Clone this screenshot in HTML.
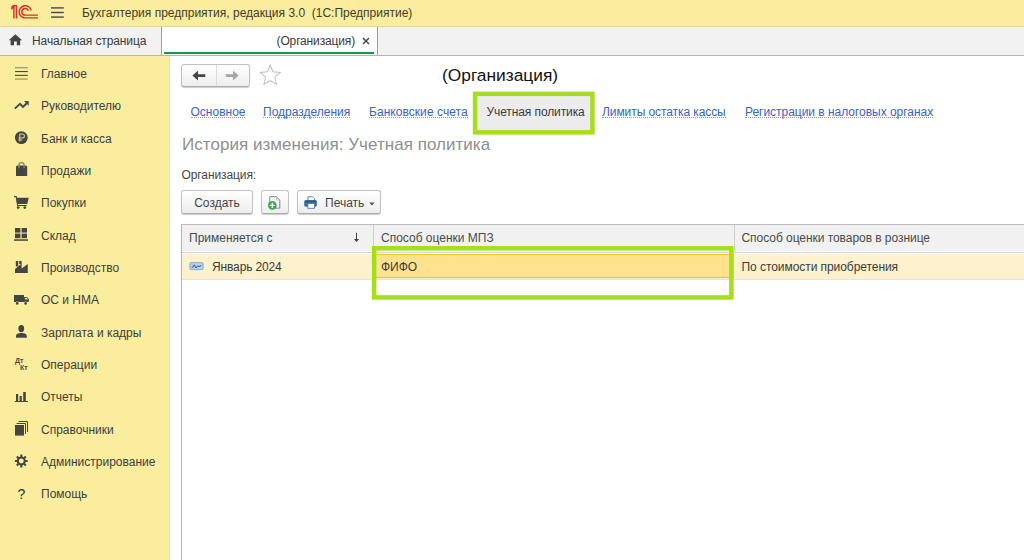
<!DOCTYPE html>
<html lang="ru"><head><meta charset="utf-8"><title>1С:Предприятие</title>
<style>
*{box-sizing:border-box;margin:0;padding:0}
html,body{width:1024px;height:560px;overflow:hidden;background:#fff}
body{font-family:"Liberation Sans",Arial,sans-serif;font-size:12px;color:#333;position:relative}
.abs{position:absolute}
#titlebar{left:0;top:0;width:1024px;height:27px;background:#fbed9e;border-bottom:1px solid #e3d58c}
#titlebar .t{left:82px;top:0;line-height:27px;font-size:12px;color:#3f3a2c;white-space:pre}
#tabbar{left:0;top:27px;width:1024px;height:29px;background:#f2f2f2;border-bottom:1px solid #b5b5b5}
#hometab{left:0;top:0;width:161px;height:28px}
#hometab .t{left:32px;top:0;line-height:28px;color:#3a3a3a;letter-spacing:-0.1px}
#sep1{left:161px;top:0;width:1px;height:28px;background:#9a9a9a}
#acttab{left:162px;top:0;width:215px;height:28px;background:#fff}
#acttab .t{right:22px;top:0;line-height:28px;color:#3a3a3a;letter-spacing:-0.15px}
#acttab .g{left:2px;right:3px;top:25px;height:2px;background:#0f9d49}
#sep2{left:377px;top:0;width:1px;height:28px;background:#9a9a9a}
#sidebar{left:0;top:56px;width:170px;height:504px;background:#fbed9e}
#sidebar .it{left:41px;line-height:16px;color:#3d3d3d;white-space:nowrap}
#sidebar svg{position:absolute}
#main{left:170px;top:56px;width:854px;height:504px;background:#fff}
.btn{position:absolute;border:1px solid #c2c2c2;border-bottom-color:#ababab;border-radius:3px;background:linear-gradient(#fff,#ededed);box-shadow:0 1px 1px rgba(0,0,0,.2);color:#444;text-align:center}
a.l{position:absolute;color:#3a62c0;text-decoration:none;border-bottom:1px dotted #7f9ad8;line-height:10px;top:51px;white-space:nowrap}
</style></head><body>

<div id="titlebar" class="abs">
  <svg class="abs" style="left:0;top:0" width="70" height="27" viewBox="0 0 70 27"><g fill="none" stroke="#de2c25" stroke-width="1.4"><path d="M11.3 9.4 L13.9 6.4 V18.6"/><path d="M11.3 7.6 L13.2 5.6 H16.4 V18.6"/><path d="M31.2 10.4 A6.1 6.1 0 1 0 25.1 17.9 H38"/><path d="M28.3 10.9 A3.3 3.3 0 1 0 25.1 15.1 H38"/></g></svg>
  <svg class="abs" style="left:50px;top:5px" width="16" height="16" viewBox="50 5 16 16"><g fill="#4b4a3f"><rect x="51" y="7.2" width="12.8" height="1.4"/><rect x="51" y="11.8" width="12.8" height="1.4"/><rect x="51" y="16.4" width="12.8" height="1.4"/></g></svg>
  <div class="abs t">Бухгалтерия предприятия, редакция 3.0  (1С:Предприятие)</div>
</div>

<div id="tabbar" class="abs">
  <div id="hometab" class="abs">
    <svg class="abs" style="left:8px;top:7px" width="15" height="12" viewBox="0 0 15 12"><path d="M7.4 0.3 L0.7 6.2 H2.6 V11.2 H6 V7.6 H8.8 V11.2 H12.2 V6.2 H14.1 Z" fill="#444"/></svg>
    <div class="abs t">Начальная страница</div>
  </div>
  <div id="sep1" class="abs"></div>
  <div id="acttab" class="abs">
    <div class="abs t">(Организация)</div>
    <svg class="abs" style="left:200px;top:10px" width="8" height="8" viewBox="0 0 8 8"><path d="M1 1 L7 7 M7 1 L1 7" stroke="#4a4a4a" stroke-width="1.5"/></svg>
    <div class="abs g"></div>
  </div>
  <div id="sep2" class="abs"></div>
</div>

<div id="sidebar" class="abs">
  <div class="abs" style="left:169px;top:0;width:1px;height:504px;background:#f1e49a"></div>
  <svg class="abs" style="left:0;top:0" width="40" height="504" viewBox="0 56 40 504">
    <g fill="#454545" stroke="none">
      <!-- Главное -->
      <rect x="15" y="67.2" width="12.8" height="1.1" opacity=".6"/><rect x="15" y="71" width="12.8" height="1.1"/><rect x="15" y="74.8" width="12.8" height="1.1"/><rect x="15" y="78.5" width="12.8" height="1.1" opacity=".6"/>
      <!-- Руководителю -->
      <path d="M14.8 108.6 L20 103.8 L23 107 L27 103" fill="none" stroke="#454545" stroke-width="1.9" stroke-linejoin="miter"/>
      <path d="M24 101 H28.7 V105.8 Z"/>
      <!-- Банк и касса -->
      <circle cx="21.3" cy="137.6" r="6.4"/>
      <path d="M19.8 141.6 V134 H22.4 A2 2 0 0 1 22.4 138 H18.4 M18.4 140 H22.2" fill="none" stroke="#d6cb8b" stroke-width="1.15"/>
      <!-- Продажи -->
      <path d="M16 166.6 L17.2 165.4 H26 L27.2 166.6 V176 H16 Z"/>
      <path d="M18.9 168.2 V165.2 A2.6 2.6 0 0 1 24.1 165.2 V168.2" fill="none" stroke="#8b846a" stroke-width="1.3"/>
      <!-- Покупки -->
      <path d="M14 196.6 H16.2 L17.6 205.5 H26.8" fill="none" stroke="#454545" stroke-width="1.1"/>
      <path d="M16.2 197.8 H28.7 L27.3 204 H17.2 Z"/>
      <circle cx="18.2" cy="207.6" r="1.4"/><circle cx="24.8" cy="207.6" r="1.4"/>
      <!-- Склад -->
      <rect x="15" y="228" width="5.4" height="4.6"/><rect x="21.6" y="228" width="5.4" height="4.6"/><rect x="15" y="233.6" width="5.4" height="4.6"/><rect x="21.6" y="233.6" width="5.4" height="4.6"/>
      <rect x="14" y="239.3" width="14" height="1.5"/>
      <!-- Производство -->
      <path d="M15 273 V269 L21.6 263.4 V268.4 L27.8 264 V273 Z"/>
      <rect x="15.8" y="261" width="2.4" height="5.4"/><rect x="19.2" y="261" width="2.4" height="3"/>
      <!-- ОС и НМА -->
      <path d="M14 295 H24 V297 H27 L28.8 299 V302 H14 Z"/>
      <path d="M24.9 297.8 H27 L28.1 299.6 H24.9 Z" fill="#ddd28e"/>
      <circle cx="17.2" cy="303.4" r="1.9" fill="#fbed9e"/><circle cx="25.6" cy="303.4" r="1.9" fill="#fbed9e"/>
      <circle cx="17.2" cy="303.4" r="1.3"/><circle cx="25.6" cy="303.4" r="1.3"/>
      <!-- Зарплата и кадры -->
      <ellipse cx="21.3" cy="328.6" rx="2.9" ry="3.6"/>
      <path d="M16 337.8 V336 A2.6 2.6 0 0 1 18 333.6 L20 333 H22.6 L24.6 333.6 A2.6 2.6 0 0 1 26.8 336 V337.8 Z"/>
      <!-- Отчеты -->
      <rect x="16" y="394" width="2.2" height="7.4"/><rect x="19.6" y="396" width="2.2" height="5.4"/><rect x="23.2" y="392" width="2.6" height="9.4"/><rect x="14.8" y="401" width="13.2" height="1"/>
      <!-- Справочники -->
      <rect x="15" y="425" width="9" height="10.6"/>
      <path d="M16.6 423.5 H25.5 V434 M18.6 421.5 H27.5 V432" fill="none" stroke="#454545" stroke-width="1"/>
      <!-- Администрирование -->
      <circle cx="21.3" cy="461" r="3.5" fill="none" stroke="#454545" stroke-width="2.1"/>
      <path d="M21.3 454.6 V457 M21.3 465 V467.4 M14.9 461 H17.3 M25.3 461 H27.7 M16.8 456.5 L18.5 458.2 M24.1 463.8 L25.8 465.5 M16.8 465.5 L18.5 463.8 M24.1 458.2 L25.8 456.5" fill="none" stroke="#454545" stroke-width="2.1"/>
    </g>
    <text x="15" y="363.4" font-family="Liberation Sans, sans-serif" font-weight="bold" font-size="7" fill="#454545">Дт</text>
    <text x="20" y="370.2" font-family="Liberation Sans, sans-serif" font-weight="bold" font-size="7" fill="#454545">Кт</text>
    <text x="17.6" y="498.8" font-family="Liberation Sans, sans-serif" font-size="14" fill="#2e2e2e">?</text>
  </svg>
  <div class="abs it" style="top:10px">Главное</div>
  <div class="abs it" style="top:42px">Руководителю</div>
  <div class="abs it" style="top:75px">Банк и касса</div>
  <div class="abs it" style="top:107px">Продажи</div>
  <div class="abs it" style="top:139px">Покупки</div>
  <div class="abs it" style="top:172px">Склад</div>
  <div class="abs it" style="top:204px">Производство</div>
  <div class="abs it" style="top:236px">ОС и НМА</div>
  <div class="abs it" style="top:269px">Зарплата и кадры</div>
  <div class="abs it" style="top:301px">Операции</div>
  <div class="abs it" style="top:333px">Отчеты</div>
  <div class="abs it" style="top:366px">Справочники</div>
  <div class="abs it" style="top:398px">Администрирование</div>
  <div class="abs it" style="top:430px">Помощь</div>
</div>

<div id="main" class="abs">
  <!-- nav buttons -->
  <div class="btn" style="left:11px;top:8px;width:69px;height:23px"></div>
  <div class="abs" style="left:46px;top:9px;width:1px;height:21px;background:#dadada"></div>
  <svg class="abs" style="left:22px;top:14px" width="14" height="12" viewBox="0 0 14 12"><path d="M0.4 5.6 L6 0.8 V4.3 H13.3 V6.9 H6 V10.4 Z" fill="#454545"/></svg>
  <svg class="abs" style="left:55px;top:14px" width="14" height="12" viewBox="0 0 14 12"><path d="M13.7 5.6 L8.1 0.8 V4.3 H0.8 V6.9 H8.1 V10.4 Z" fill="#a6a6a6"/></svg>
  <svg class="abs" style="left:89.3px;top:8.3px" width="22.4" height="21.4" viewBox="0 0 22 21"><path d="M11 1.2 L13.9 7.6 L20.8 8.3 L15.6 13 L17.1 19.8 L11 16.3 L4.9 19.8 L6.4 13 L1.2 8.3 L8.1 7.6 Z" fill="#fff" stroke="#b9c0c6" stroke-width="1"/></svg>
  <div class="abs" style="left:272px;top:8px;font-size:17.33px;line-height:22px;color:#111;white-space:nowrap">(Организация)</div>

  <!-- links -->
  <a class="l" style="left:20.5px">Основное</a>
  <a class="l" style="left:93px">Подразделения</a>
  <a class="l" style="left:199px;letter-spacing:0.05px">Банковские счета</a>
  <svg class="abs" style="left:300px;top:32px" width="130" height="50" viewBox="470 88 130 50"><rect x="475.05" y="93.85" width="117.4" height="38.5" fill="#ececec" stroke="#a6de1c" stroke-width="4.5"/></svg>
  <div class="abs" style="left:316.5px;top:49px;line-height:14px;color:#3a3a3a;white-space:nowrap;letter-spacing:-0.1px">Учетная политика</div>
  <a class="l" style="left:432px;letter-spacing:-0.08px">Лимиты остатка кассы</a>
  <a class="l" style="left:575px;letter-spacing:-0.03px">Регистрации в налоговых органах</a>

  <div class="abs" style="left:12px;top:78px;font-size:17px;line-height:22px;color:#8f8f8f;white-space:nowrap;letter-spacing:0.04px">История изменения: Учетная политика</div>
  <div class="abs" style="left:11.5px;top:112px;line-height:14px;color:#454545;white-space:nowrap;letter-spacing:-0.1px">Организация:</div>

  <!-- toolbar -->
  <div class="btn" style="left:11px;top:134px;width:72px;height:24px;line-height:24px">Создать</div>
  <div class="btn" style="left:91px;top:134px;width:27.5px;height:24px"></div>
  <svg class="abs" style="left:96px;top:138px" width="18" height="16" viewBox="266 194 18 16">
    <path d="M269.8 196.7 H276.4 L279.8 200 V208.1 H269.8 Z" fill="#fff" stroke="#7187a6" stroke-width="1"/>
    <path d="M276.4 196.7 V200 H279.8" fill="none" stroke="#a9b7cc" stroke-width="0.9"/>
    <circle cx="272.35" cy="205.4" r="4.3" fill="#30ac4b"/>
    <path d="M272.35 202.8 V208 M269.75 205.4 H274.95" stroke="#fff" stroke-width="1.4" fill="none"/>
  </svg>
  <div class="btn" style="left:127px;top:134px;width:84px;height:24px;line-height:24px;text-align:left;padding-left:27px">Печать</div>
  <svg class="abs" style="left:133px;top:139px" width="16" height="14" viewBox="303 195 16 14">
    <path d="M308 200.6 V196.7 H312.6 L314.4 198.5 V200.6" fill="#fff" stroke="#5779a6" stroke-width="0.9"/>
    <rect x="304.2" y="200.1" width="12.7" height="6.6" rx="1.6" fill="#3c69a0"/>
    <rect x="304.9" y="201" width="11.3" height="1.2" rx=".6" fill="#2c558a"/>
    <rect x="307.9" y="203.6" width="6.6" height="4.7" fill="#fff" stroke="#5779a6" stroke-width="0.9"/>
  </svg>
  <svg class="abs" style="left:198px;top:146px" width="8" height="5" viewBox="0 0 8 5"><path d="M1.2 0.4 H6.6 L3.9 3.4 Z" fill="#555"/></svg>

  <!-- table -->
  <div class="abs" style="left:11px;top:167.6px;width:843px;height:1px;background:#bcbcbc"></div>
  <div class="abs" style="left:11px;top:168px;width:1px;height:336px;background:#b2b2b2"></div>
  <div class="abs" style="left:12px;top:168.8px;width:842px;height:26px;background:#f1f1f1"></div>
  <div class="abs" style="left:12px;top:196.1px;width:842px;height:1px;background:#d4d4d4"></div>
  <div class="abs" style="left:203px;top:169px;width:1px;height:26px;background:#cdcdcd"></div>
  <div class="abs" style="left:564px;top:169px;width:1px;height:26px;background:#cdcdcd"></div>
  <div class="abs" style="left:19px;top:175px;line-height:14px;color:#4a4a4a;white-space:nowrap">Применяется с</div>
  <svg class="abs" style="left:182px;top:176px" width="9" height="11" viewBox="352 232 9 11"><path d="M356.5 232.8 V241.4" stroke="#444" stroke-width="1" fill="none"/><path d="M353.9 238.9 H359.1 L356.5 242.1 Z" fill="#444"/></svg>
  <div class="abs" style="left:211px;top:175px;line-height:14px;color:#4a4a4a;white-space:nowrap">Способ оценки МПЗ</div>
  <div class="abs" style="left:571.5px;top:175px;line-height:14px;color:#4a4a4a;white-space:nowrap;letter-spacing:-0.05px">Способ оценки товаров в рознице</div>
  <div class="abs" style="left:12px;top:197.5px;width:842px;height:25px;background:#fdf2cd"></div>
  <div class="abs" style="left:12px;top:223.4px;width:842px;height:1px;background:#e4e4e4"></div>
  <div class="abs" style="left:204px;top:197.6px;width:360px;height:24.6px;background:#ffe28e;border-top:1.6px solid #f8c027;border-bottom:1.8px solid #f8c027"></div>
  <svg class="abs" style="left:19px;top:206px" width="15" height="9" viewBox="189 262 15 9"><rect x="189.9" y="262.6" width="13.2" height="7" rx="1" fill="#b7d3ee" stroke="#8fa9c8" stroke-width="1"/><path d="M191.6 267.2 H193 L194.2 264.8 L196 268 L197.6 265.8 L199 266.6 L201.4 265.6" fill="none" stroke="#2f5f9e" stroke-width="1"/></svg>
  <div class="abs" style="left:42px;top:204px;line-height:14px;color:#3a3a3a;white-space:nowrap;letter-spacing:-0.14px">Январь 2024</div>
  <div class="abs" style="left:211px;top:204px;line-height:14px;color:#3a3a3a;white-space:nowrap">ФИФО</div>
  <div class="abs" style="left:571.5px;top:204px;line-height:14px;color:#3a3a3a;white-space:nowrap;letter-spacing:-0.06px">По стоимости приобретения</div>
  <svg class="abs" style="left:198px;top:186px" width="370" height="62" viewBox="368 242 370 62"><rect x="374.15" y="248.25" width="357.2" height="49.2" fill="none" stroke="#a6de1c" stroke-width="4.5"/></svg>
</div>
</body></html>
